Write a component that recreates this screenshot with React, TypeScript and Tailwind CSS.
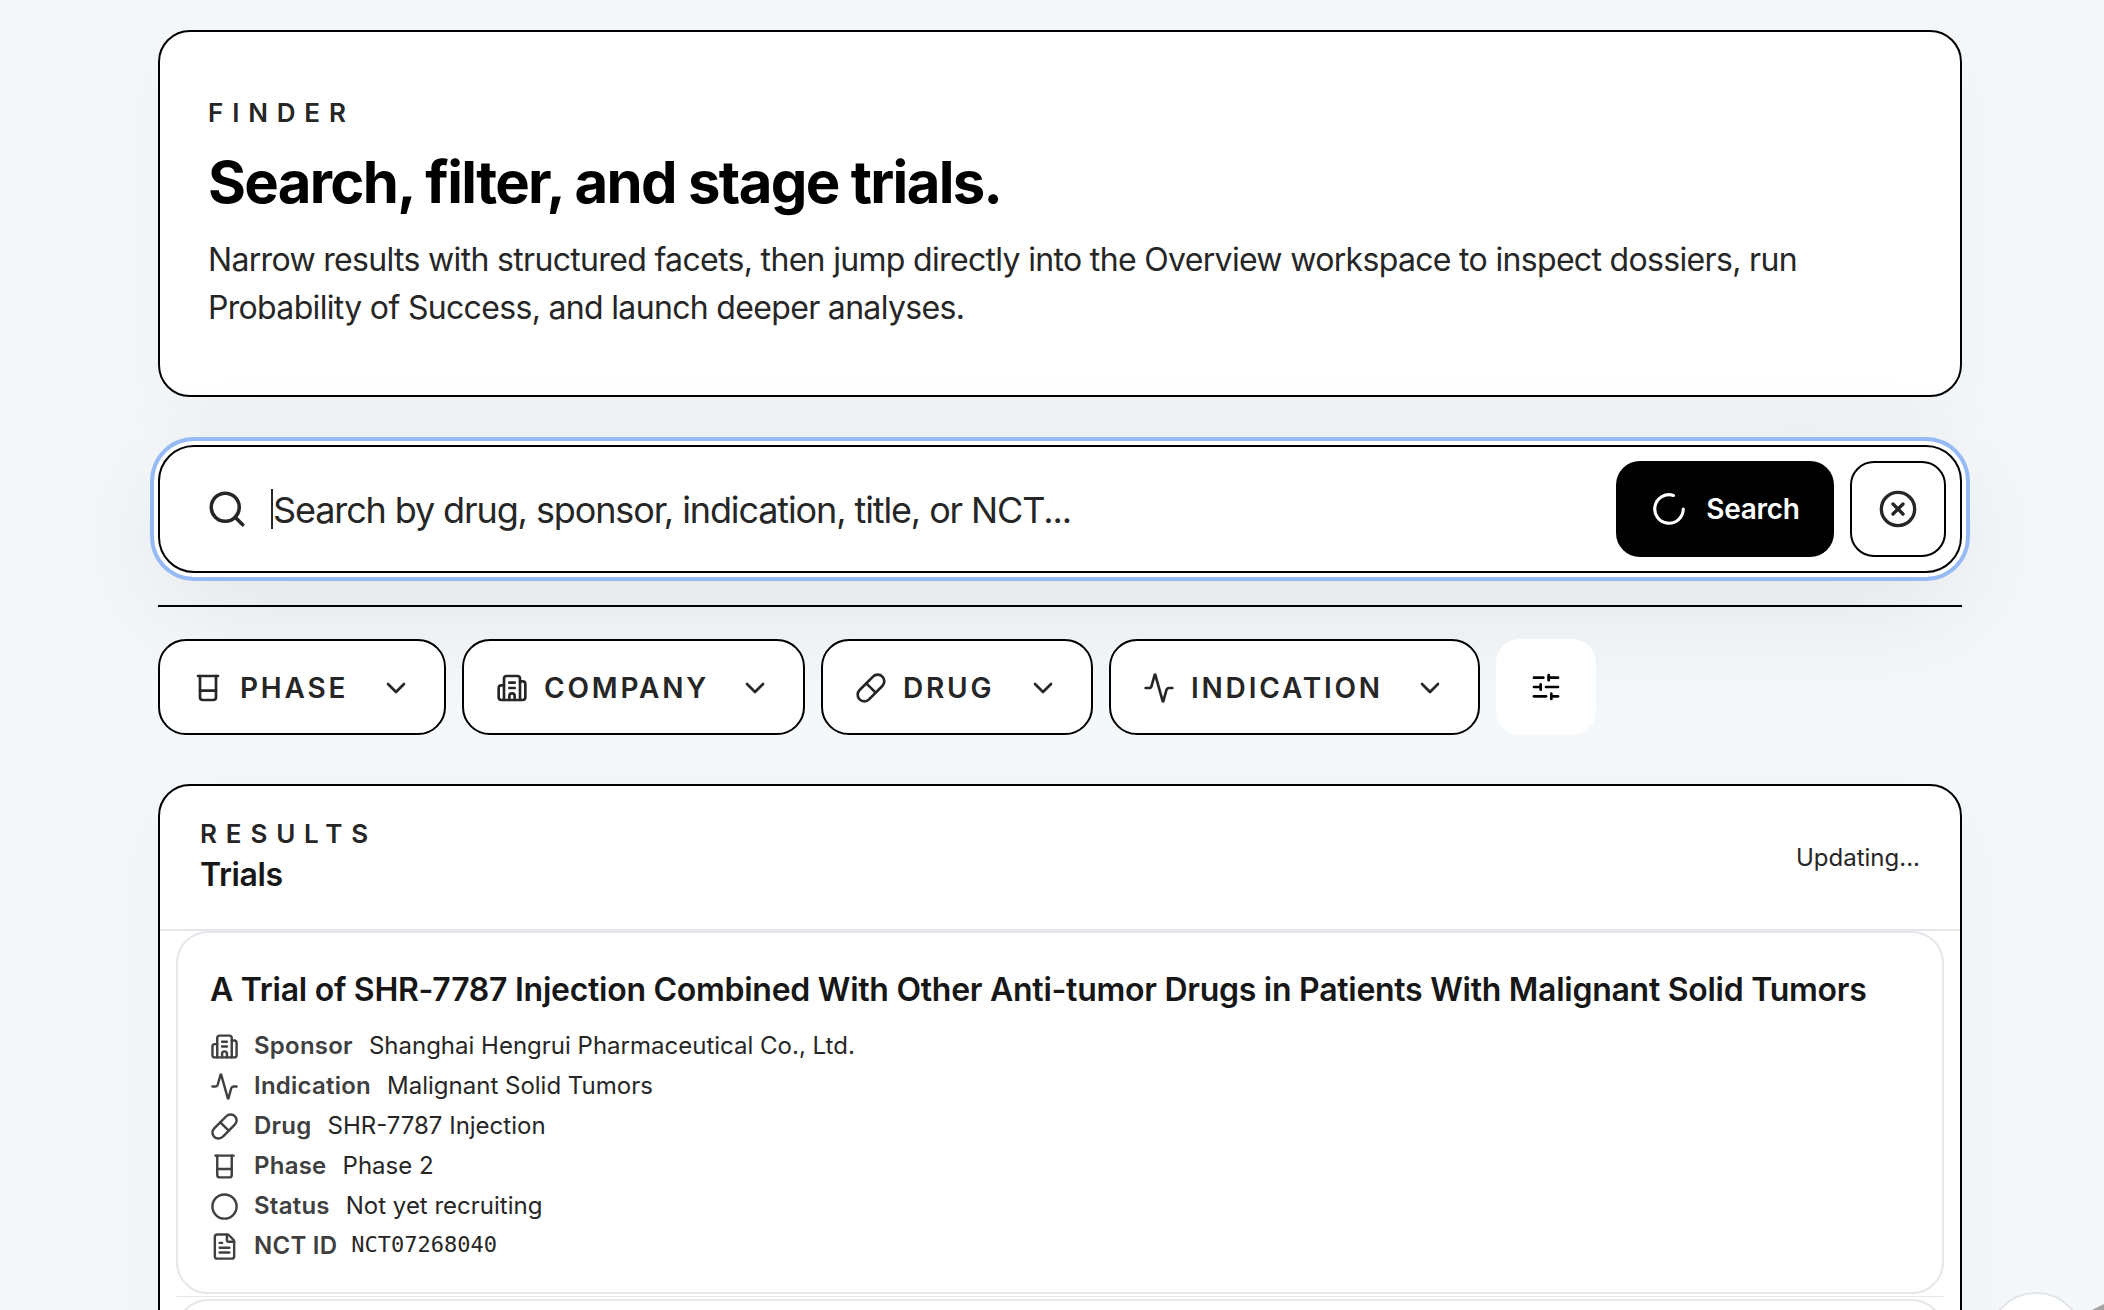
import { Activity, Beaker, Building2, ChevronDown, Circle, CircleX, FileText, LoaderCircle, Pill, Search, SlidersHorizontal } from "lucide-react";
import type { LucideIcon } from "lucide-react";

const filters: { label: string; icon: LucideIcon; width: string }[] = [
  { label: "PHASE", icon: Beaker, width: "w-[288px]" },
  { label: "COMPANY", icon: Building2, width: "w-[343px]" },
  { label: "DRUG", icon: Pill, width: "w-[272px]" },
  { label: "INDICATION", icon: Activity, width: "w-[371px]" },
];

const meta: { label: string; value: string; icon: LucideIcon; mono?: boolean }[] = [
  { label: "Sponsor", value: "Shanghai Hengrui Pharmaceutical Co., Ltd.", icon: Building2 },
  { label: "Indication", value: "Malignant Solid Tumors", icon: Activity },
  { label: "Drug", value: "SHR-7787 Injection", icon: Pill },
  { label: "Phase", value: "Phase 2", icon: Beaker },
  { label: "Status", value: "Not yet recruiting", icon: Circle },
  { label: "NCT ID", value: "NCT07268040", icon: FileText, mono: true },
];

function FilterButton({ label, icon: Icon, width }: { label: string; icon: LucideIcon; width: string }) {
  return (
    <button className={`flex h-[96px] ${width} items-center justify-between rounded-[28px] border-2 border-black bg-white px-[32px] pt-[2px] text-[#262626]`}>
      <span className="flex items-center gap-[16px]">
        <Icon size={32} strokeWidth={2} />
        <span className="text-[28px] font-semibold tracking-[0.1em]">{label}</span>
      </span>
      <ChevronDown size={32} strokeWidth={2} />
    </button>
  );
}

export default function App() {
  return (
    <div className="relative h-screen overflow-hidden bg-[#f5f8fb] font-['Inter',sans-serif] text-[#171717]">
      <div className="ml-[158px] flex w-[1804px] flex-col pt-[30px]">
        <section className="h-[367px] rounded-[32px] border-2 border-black bg-white px-[48px] pt-[65px] shadow-[0_24px_80px_rgba(0,0,0,0.03)]">
          <p className="text-[26px] leading-[32px] font-semibold tracking-[0.34em] text-[#262626]">FINDER</p>
          <h1 className="mt-[17px] text-[58px] leading-[72px] font-bold tracking-[-0.0285em] text-black">Search, filter, and stage trials.</h1>
          <p className="mt-[18px] text-[32px] leading-[48px] tracking-[-0.021em] text-[#262626]">
            Narrow results with structured facets, then jump directly into the Overview workspace to inspect dossiers, run Probability of Success, and launch deeper analyses.
          </p>
        </section>

        <div className="mt-[48px] flex h-[128px] items-center rounded-[36px] border-2 border-black bg-white pr-[14px] pl-[46px] shadow-[0_0_0_4px_#ffffff,0_0_0_8px_#96baf5,0_30px_120px_rgba(0,0,0,0.09)]">
          <Search size={42} strokeWidth={2} className="shrink-0 text-[#262626]" />
          <span className="ml-[23px] h-[40px] w-[2px] shrink-0 bg-[#262626]" />
          <input readOnly placeholder="Search by drug, sponsor, indication, title, or NCT..." className="mt-[2px] min-w-0 flex-1 bg-transparent text-[36px] tracking-[-0.031em] text-[#262626] outline-none placeholder:text-[#262626]" />
          <button className="flex h-[96px] w-[218px] items-center justify-center gap-[18px] rounded-[24px] bg-black text-[28px] font-semibold tracking-[-0.01em] text-white">
            <LoaderCircle size={38} strokeWidth={2} />
            Search
          </button>
          <button className="ml-[16px] flex h-[96px] w-[96px] items-center justify-center rounded-[24px] border-2 border-black bg-white text-[#262626]">
            <CircleX size={40} strokeWidth={2} />
          </button>
        </div>

        <div className="mt-[32px] h-[2px] bg-black" />

        <div className="mt-[32px] flex gap-[16px]">
          {filters.map((f) => (
            <FilterButton key={f.label} {...f} />
          ))}
          <button className="flex h-[96px] w-[100px] items-center justify-center rounded-[24px] bg-white text-black">
            <SlidersHorizontal size={32} strokeWidth={2} />
          </button>
        </div>

        <section className="mt-[49px] rounded-t-[32px] border-2 border-black bg-white shadow-[0_24px_80px_rgba(0,0,0,0.04)]">
          <div className="flex h-[145px] items-center justify-between border-b-2 border-[#e5e7eb] px-[40px]">
            <div className="mb-[3px]">
              <p className="text-[26px] leading-[32px] font-semibold tracking-[0.34em] text-[#262626]">RESULTS</p>
              <h2 className="mt-[5px] text-[32px] leading-[40px] font-semibold tracking-[-0.012em]">Trials</h2>
            </div>
            <span className="text-[24px] text-[#262626]">Updating...</span>
          </div>
          <div className="px-[16px]">
            <article className="h-[363px] rounded-[32px] border-2 border-[#e5e7eb] bg-white px-[32px] pt-[37px]">
              <h3 className="text-[32px] leading-[40px] font-semibold tracking-[-0.0085em]">A Trial of SHR-7787 Injection Combined With Other Anti-tumor Drugs in Patients With Malignant Solid Tumors</h3>
              <div className="mt-[16px] flex flex-col">
                {meta.map((m) => (
                  <div key={m.label} className="flex h-[40px] items-center text-[24px]">
                    <m.icon size={29} strokeWidth={2} className="shrink-0 text-[#404040]" />
                    <span className="ml-[15px] font-semibold tracking-[0.01em] text-[#404040]">{m.label}</span>
                    <span className={m.mono ? "mb-[3px] ml-[14px] font-['DejaVu_Sans_Mono',monospace] text-[22px] text-[#262626]" : "ml-[16px] text-[#262626]"}>{m.value}</span>
                  </div>
                ))}
              </div>
            </article>
            <div className="mt-[2px] h-[1px] bg-[#e5e7eb]" />
            <article className="mt-[2px] h-[120px] rounded-[32px] border-2 border-[#e5e7eb] bg-white" />
          </div>
        </section>
      </div>
      <div className="absolute right-[20px] bottom-[-78px] h-[96px] w-[96px] rounded-full border-2 border-[#e2e5e9] bg-white" />
      <svg className="absolute right-0 bottom-0" width="12" height="6" viewBox="0 0 12 6">
        <polygon points="0,6 12,0 12,6" fill="#a3a3a3" />
      </svg>
    </div>
  );
}
